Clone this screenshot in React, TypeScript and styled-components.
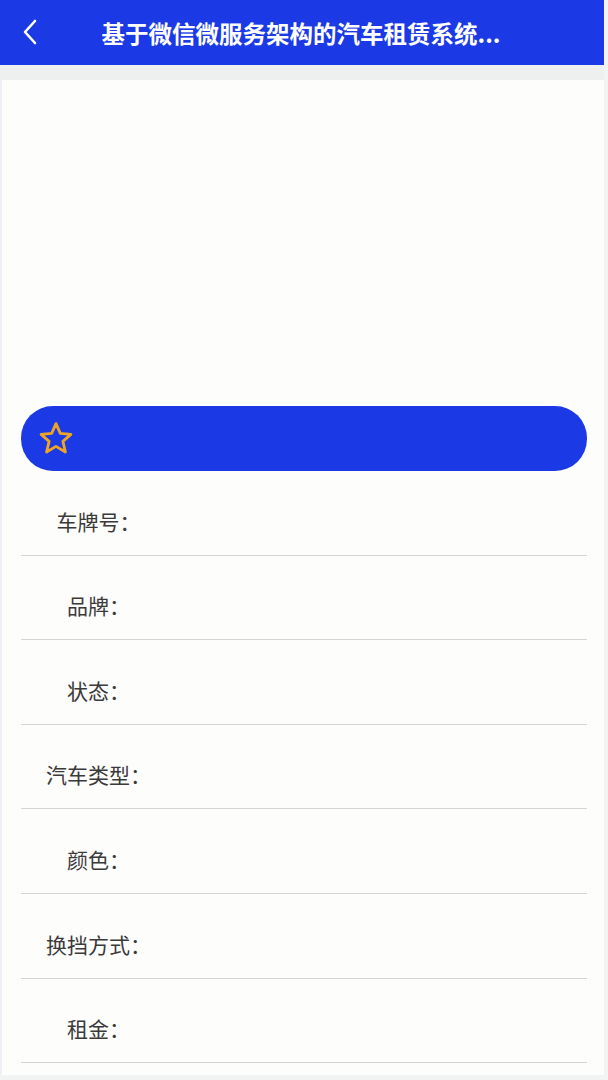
import styled, { createGlobalStyle } from 'styled-components';

const GlobalStyle = createGlobalStyle`
  html, body {
    margin: 0;
    padding: 0;
    background: #f2f3f3;
  }
  body {
    font-family: "Noto Sans CJK SC", "Noto Sans", "Liberation Sans", sans-serif;
  }
  * {
    box-sizing: border-box;
  }
`;

const blue = '#1b3ae6';

const fields = ['车牌号：', '品牌：', '状态：', '汽车类型：', '颜色：', '换挡方式：', '租金：'];

function BackIcon() {
  return (
    <svg width="16" height="26" viewBox="0 0 16 26" fill="none">
      <path
        d="M13 2 L3 13 L13 24"
        stroke="#ffffff"
        strokeWidth="2.6"
        strokeLinecap="round"
        strokeLinejoin="round"
      />
    </svg>
  );
}

function StarIcon() {
  return (
    <svg width="36" height="36" viewBox="0 0 36 36" fill="none">
      <path
        d="M18 2.6 L22.3 12.4 L32.9 13.4 L24.9 20.4 L27.4 31 L18 25.4 L8.6 31 L11.1 20.4 L3.1 13.4 L13.7 12.4 Z"
        stroke="#f0a424"
        strokeWidth="2.8"
        strokeLinejoin="round"
      />
    </svg>
  );
}

export default function App() {
  return (
    <>
      <GlobalStyle />
      <Page>
        <Header>
          <BackButton>
            <BackIcon />
          </BackButton>
          <Title>基于微信微服务架构的汽车租赁系统...</Title>
        </Header>
        <Divider />
        <Content>
          <Swiper />
          <FavBar>
            <StarIcon />
          </FavBar>
          <DetailList>
            {fields.map((label, index) => (
              <DetailRow key={index}>
                <Label>{label}</Label>
                <Value />
              </DetailRow>
            ))}
          </DetailList>
        </Content>
      </Page>
    </>
  );
}

const Page = styled.div`
  width: 604px;
  display: flex;
  flex-direction: column;
`;

const Header = styled.div`
  height: 65px;
  background-color: ${blue};
  display: flex;
  align-items: center;
  justify-content: center;
  position: relative;
`;

const BackButton = styled.div`
  position: absolute;
  left: 22px;
  top: 19px;
  display: flex;
`;

const Title = styled.div`
  max-width: 410px;
  margin-left: -2px;
  color: #ffffff;
  font-size: 23.5px;
  font-weight: 700;
  white-space: nowrap;
  overflow: hidden;
  text-overflow: ellipsis;
`;

const Divider = styled.div`
  height: 15px;
  background-color: #eeefef;
`;

const Content = styled.div`
  background-color: #fdfdfc;
  border-left: 2px solid #eef0f5;
  padding-bottom: 12px;
  display: flex;
  flex-direction: column;
`;

const Swiper = styled.div`
  height: 326px;
`;

const FavBar = styled.div`
  margin: 0 17px 0 19px;
  height: 65px;
  border-radius: 32px;
  background-color: ${blue};
  display: flex;
  align-items: center;
  padding-left: 17px;
`;

const DetailList = styled.div`
  margin: 0 17px 0 19px;
  display: flex;
  flex-direction: column;
`;

const DetailRow = styled.div`
  height: 84.6px;
  border-bottom: 1px solid #d4d4d4;
  display: flex;
  align-items: flex-end;
  padding-bottom: 21px;
`;

const Label = styled.div`
  width: 155px;
  text-align: center;
  font-size: 21px;
  line-height: 26px;
  color: #3a3a3a;
`;

const Value = styled.div`
  flex: 1;
  font-size: 21px;
  line-height: 26px;
  color: #333333;
`;
